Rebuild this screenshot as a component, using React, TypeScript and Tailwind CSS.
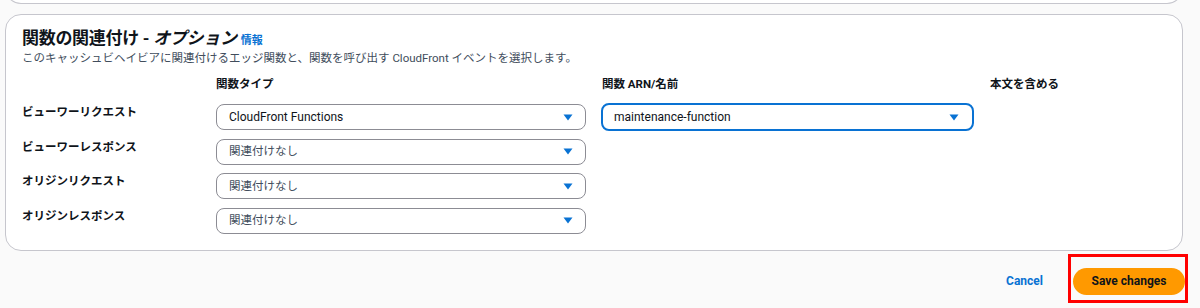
import React from "react";

const rows = [
  { label: "ビューワーリクエスト", type: "CloudFront Functions", arn: "maintenance-function" },
  { label: "ビューワーレスポンス", type: "関連付けなし" },
  { label: "オリジンリクエスト", type: "関連付けなし" },
  { label: "オリジンレスポンス", type: "関連付けなし" },
];

function Caret() {
  return (
    <svg width="10" height="7" viewBox="0 0 10 7" className="shrink-0">
      <path d="M0.5 0.5 H9.5 L5 6.5 Z" fill="#0972d3" />
    </svg>
  );
}

function Select({ value, selected, focused }: { value: string; selected?: boolean; focused?: boolean }) {
  return (
    <div
      className={
        focused
          ? "flex items-center justify-between h-[28px] -my-[1px] -mx-[1px] pl-[11px] pr-[13px] rounded-[8px] border-2 border-[#0972d3] bg-white"
          : "flex items-center justify-between h-[26px] pl-[12px] pr-[12px] rounded-[8px] border border-[#8c8c94] bg-white"
      }
    >
      <span className={selected ? "text-[12px] text-[#0f141a]" : "text-[11.5px] text-[#414d5c]"}>{value}</span>
      <Caret />
    </div>
  );
}

export default function App() {
  return (
    <div
      className="w-[1200px] h-[308px] overflow-hidden bg-[#fafafa] pl-[5px] pr-[17px]"
      style={{ fontFamily: "Roboto, 'Noto Sans CJK JP', sans-serif" }}
    >
      {/* previous container, only its bottom edge shows */}
      <div className="h-[40px] -mt-[36px] rounded-b-[16px] border-x border-b border-[#c6c6cd] bg-white" />

      <div className="mt-[10px] rounded-[16px] border border-[#c6c6cd] bg-white pl-[16px] pr-[16px] pt-[11px] pb-[16px]">
        <div className="flex items-baseline gap-[4px] h-[24px]">
          <h2 className="text-[17px] leading-[24px] font-bold tracking-[-0.3px] text-[#0f141a]">
            関数の関連付け - <span className="italic">オプション</span>
          </h2>
          <a className="text-[11px] font-bold text-[#0972d3]">情報</a>
        </div>
        <p className="text-[11.5px] leading-[16px] text-[#414d5c]">
          このキャッシュビヘイビアに関連付けるエッジ関数と、関数を呼び出す CloudFront イベントを選択します。
        </p>

        <div className="grid grid-cols-[194px_370px_404px_1fr] mt-[10px] text-[11.5px] leading-[16px] text-[#0f141a]">
          <div />
          <div className="font-bold">関数タイプ</div>
          <div className="font-bold pl-[16px]">関数 ARN/名前</div>
          <div className="font-bold">本文を含める</div>
        </div>

        <div className="flex flex-col gap-[8.67px] mt-[12px]">
          {rows.map((r) => (
            <div key={r.label} className="grid grid-cols-[194px_370px_404px_1fr] items-start">
              <div className="text-[11.5px] leading-[16px] font-bold text-[#0f141a]">{r.label}</div>
              <Select value={r.type} selected={!!r.arn} />
              <div className="pl-[16px] pr-[17px]">
                {r.arn && <Select value={r.arn} selected focused />}
              </div>
              <div />
            </div>
          ))}
        </div>
      </div>

      <div className="flex items-center justify-end gap-[30px] mt-[17px]">
        <a className="text-[12px] font-bold text-[#0972d3]">Cancel</a>
        <div className="relative -mr-[2px]">
          <button className="h-[27px] w-[112px] rounded-full bg-[#ff9900] text-[12px] font-bold text-[#0f141a]">
            Save changes
          </button>
          <div className="absolute -left-[5px] -top-[14px] -right-[3px] -bottom-[8px] border-[3px] border-[#ff0000]" />
        </div>
      </div>
    </div>
  );
}
